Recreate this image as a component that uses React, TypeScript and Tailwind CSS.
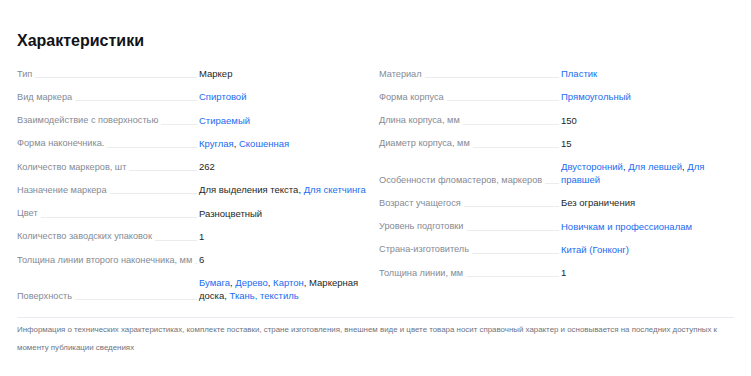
type Part = { text: string; link?: boolean };

interface Row {
  label: string;
  value: Part[];
}

const L = (text: string): Part => ({ text, link: true });
const T = (text: string): Part => ({ text });

const leftRows: Row[] = [
  { label: 'Тип', value: [T('Маркер')] },
  { label: 'Вид маркера', value: [L('Спиртовой')] },
  { label: 'Взаимодействие с поверхностью', value: [L('Стираемый')] },
  { label: 'Форма наконечника.', value: [L('Круглая'), T(', '), L('Скошенная')] },
  { label: 'Количество маркеров, шт', value: [T('262')] },
  { label: 'Назначение маркера', value: [T('Для выделения текста, '), L('Для скетчинга')] },
  { label: 'Цвет', value: [T('Разноцветный')] },
  { label: 'Количество заводских упаковок', value: [T('1')] },
  { label: 'Толщина линии второго наконечника, мм', value: [T('6')] },
  {
    label: 'Поверхность',
    value: [L('Бумага'), T(', '), L('Дерево'), T(', '), L('Картон'), T(', Маркерная доска, '), L('Ткань, текстиль')],
  },
];

const rightRows: Row[] = [
  { label: 'Материал', value: [L('Пластик')] },
  { label: 'Форма корпуса', value: [L('Прямоугольный')] },
  { label: 'Длина корпуса, мм', value: [T('150')] },
  { label: 'Диаметр корпуса, мм', value: [T('15')] },
  {
    label: 'Особенности фломастеров, маркеров',
    value: [L('Двусторонний'), T(', '), L('Для левшей'), T(', '), L('Для правшей')],
  },
  { label: 'Возраст учащегося', value: [T('Без ограничения')] },
  { label: 'Уровень подготовки', value: [L('Новичкам и профессионалам')] },
  { label: 'Страна-изготовитель', value: [L('Китай (Гонконг)')] },
  { label: 'Толщина линии, мм', value: [T('1')] },
];

function SpecRow({ row }: { row: Row }) {
  return (
    <div className="flex items-end">
      <div className="flex w-[182px] shrink-0 items-end pr-[2px]">
        <span className="relative top-[0.5px] whitespace-nowrap text-[9.2px] text-[#858a94]">{row.label}</span>
        <div className="mb-[2px] ml-[3px] flex-1 border-b border-[#eaecf0]" />
      </div>
      <div className="w-[170px] text-[#1c1f26]">
        {row.value.map((part, i) =>
          part.link ? (
            <a key={i} href="#" className="text-[#1a6cf0]">
              {part.text}
            </a>
          ) : (
            <span key={i}>{part.text}</span>
          ),
        )}
      </div>
    </div>
  );
}

export default function App() {
  return (
    <div
      className="h-[376px] w-[751px] bg-white px-[17px] pt-[30px]"
      style={{ fontFamily: '"Liberation Sans", Arial, sans-serif' }}
    >
      <h2 className="text-[16px] font-bold leading-[22px] text-[#111318]">Характеристики</h2>

      <div className="mt-[15px] grid grid-cols-2 gap-x-[7px] text-[9.5px] leading-[13px]">
        <div className="flex flex-col gap-[10.25px]">
          {leftRows.map((row) => (
            <SpecRow key={row.label} row={row} />
          ))}
        </div>
        <div className="flex flex-col gap-[10.25px]">
          {rightRows.map((row) => (
            <SpecRow key={row.label} row={row} />
          ))}
        </div>
      </div>

      <div className="mt-[15px] border-t border-[#e8ebf2] pt-[3px] text-[7.9px] leading-[18px] text-[#6f7480]">
        Информация о технических характеристиках, комплекте поставки, стране изготовления, внешнем виде и цвете товара
        носит справочный характер и основывается на последних доступных к моменту публикации сведениях
      </div>
    </div>
  );
}
